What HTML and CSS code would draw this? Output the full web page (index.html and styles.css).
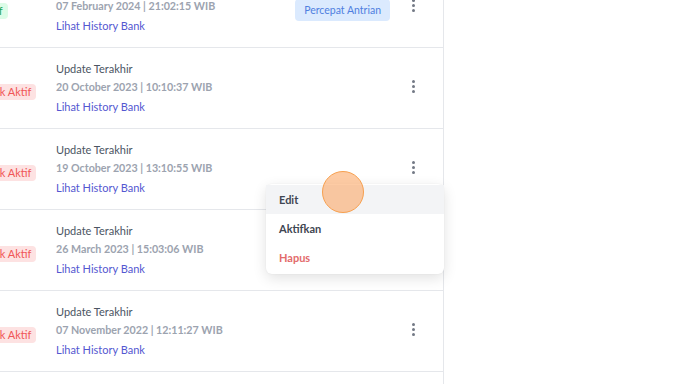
FILE: index.html
```html
<!DOCTYPE html>
<html lang="id">
<head>
    <meta charset="UTF-8">
    <meta name="viewport" content="width=device-width, initial-scale=1.0">
    <title>Daftar Bank</title>
    <link rel="stylesheet" href="styles.css">
</head>
<body>
    <div class="list">
        <div class="row">
            <div class="status"><span class="badge badge-on">Aktif</span></div>
            <div class="info">
                <div class="label">Update Terakhir</div>
                <div class="date">07 February 2024 | 21:02:15 WIB</div>
                <a class="link" href="#">Lihat History Bank</a>
            </div>
            <button class="btn-queue">Percepat Antrian</button>
            <div class="more"><span class="dots"></span></div>
        </div>

        <div class="row">
            <div class="status"><span class="badge badge-off">Tidak Aktif</span></div>
            <div class="info">
                <div class="label">Update Terakhir</div>
                <div class="date">20 October 2023 | 10:10:37 WIB</div>
                <a class="link" href="#">Lihat History Bank</a>
            </div>
            <div class="more"><span class="dots"></span></div>
        </div>

        <div class="row">
            <div class="status"><span class="badge badge-off">Tidak Aktif</span></div>
            <div class="info">
                <div class="label">Update Terakhir</div>
                <div class="date">19 October 2023 | 13:10:55 WIB</div>
                <a class="link" href="#">Lihat History Bank</a>
            </div>
            <div class="more">
                <span class="dots"></span>
                <ul class="menu">
                    <li class="active">Edit</li>
                    <li>Aktifkan</li>
                    <li class="danger">Hapus</li>
                </ul>
            </div>
        </div>

        <div class="row">
            <div class="status"><span class="badge badge-off">Tidak Aktif</span></div>
            <div class="info">
                <div class="label">Update Terakhir</div>
                <div class="date">26 March 2023 | 15:03:06 WIB</div>
                <a class="link" href="#">Lihat History Bank</a>
            </div>
            <div class="more"><span class="dots"></span></div>
        </div>

        <div class="row">
            <div class="status"><span class="badge badge-off">Tidak Aktif</span></div>
            <div class="info">
                <div class="label">Update Terakhir</div>
                <div class="date">07 November 2022 | 12:11:27 WIB</div>
                <a class="link" href="#">Lihat History Bank</a>
            </div>
            <div class="more"><span class="dots"></span></div>
        </div>

        <div class="row">
            <div class="status"><span class="badge badge-off">Tidak Aktif</span></div>
            <div class="info">
                <div class="label">Update Terakhir</div>
                <div class="date">01 November 2022 | 09:41:02 WIB</div>
                <a class="link" href="#">Lihat History Bank</a>
            </div>
            <div class="more"><span class="dots"></span></div>
        </div>
    </div>

    <div class="click"></div>
</body>
</html>
```

FILE: styles.css
```css
body {
    margin: 0;
    background-color: #fff;
    font-family: Lato, "Noto Sans", sans-serif;
    overflow: hidden;
    height: 384px;
    position: relative;
}
.list {
    margin: -33px 0 0 -40px;
    width: 483px;
    border-right: 1px solid #e5e7eb;
}
.row {
    display: flex;
    align-items: center;
    height: 80px;
    border-bottom: 1px solid #e5e7eb;
}
.status {
    width: 96px;
    padding-left: 14px;
    box-sizing: border-box;
    margin-top: 3px;
}
.badge {
    display: inline-block;
    font-size: 11px;
    line-height: 16px;
    padding: 0 5px;
    border-radius: 4px;
}
.badge-on {
    background-color: #dcfce7;
    color: #22a55a;
}
.badge-off {
    background-color: #fde2e2;
    color: #f05656;
}
.info {
    flex: 1;
    align-self: flex-start;
    padding-top: 12px;
    font-size: 11px;
    line-height: 18px;
}
.label {
    color: #4b5563;
}
.date {
    color: #9ca3af;
    font-weight: 700;
    font-size: 10.7px;
}
.link {
    display: inline-block;
    margin-top: 2px;
    color: #5457d1;
    text-decoration: none;
}
.btn-queue {
    font-family: inherit;
    font-size: 10.5px;
    color: #4f7fe0;
    background-color: #dbeafe;
    border: none;
    border-radius: 4px;
    height: 22px;
    padding: 0 9px;
    margin-top: 6px;
    margin-right: 11px;
}
.more {
    position: relative;
    width: 24px;
    height: 24px;
    margin-right: 18px;
    display: flex;
    align-items: center;
    justify-content: center;
    margin-top: -3px;
}
.dots,
.dots::before,
.dots::after {
    display: block;
    width: 3px;
    height: 3px;
    border-radius: 50%;
    background-color: #737985;
}
.dots {
    position: relative;
}
.dots::before,
.dots::after {
    content: "";
    position: absolute;
    left: 0;
}
.dots::before {
    top: -5px;
}
.dots::after {
    top: 5px;
}
.menu {
    position: absolute;
    top: calc(100% + 4px);
    right: -19px;
    width: 178px;
    margin: 0;
    padding: 1px 0 2px;
    list-style: none;
    background-color: #fff;
    border-radius: 6px;
    box-shadow: 0 4px 14px rgba(0, 0, 0, 0.12), 0 0 2px rgba(0, 0, 0, 0.06);
    z-index: 2;
}
.menu li {
    height: 29px;
    line-height: 29px;
    padding-left: 13px;
    font-size: 11px;
    font-weight: 700;
    color: #3f4652;
}
.menu li.active {
    background-color: #f3f4f6;
}
.menu li.danger {
    color: #e36b6b;
}
.click {
    position: absolute;
    left: 322px;
    top: 171px;
    width: 40px;
    height: 40px;
    border-radius: 50%;
    background-color: rgba(251, 160, 90, 0.55);
    border: 1.5px solid #f7a04f;
    z-index: 3;
}
```
